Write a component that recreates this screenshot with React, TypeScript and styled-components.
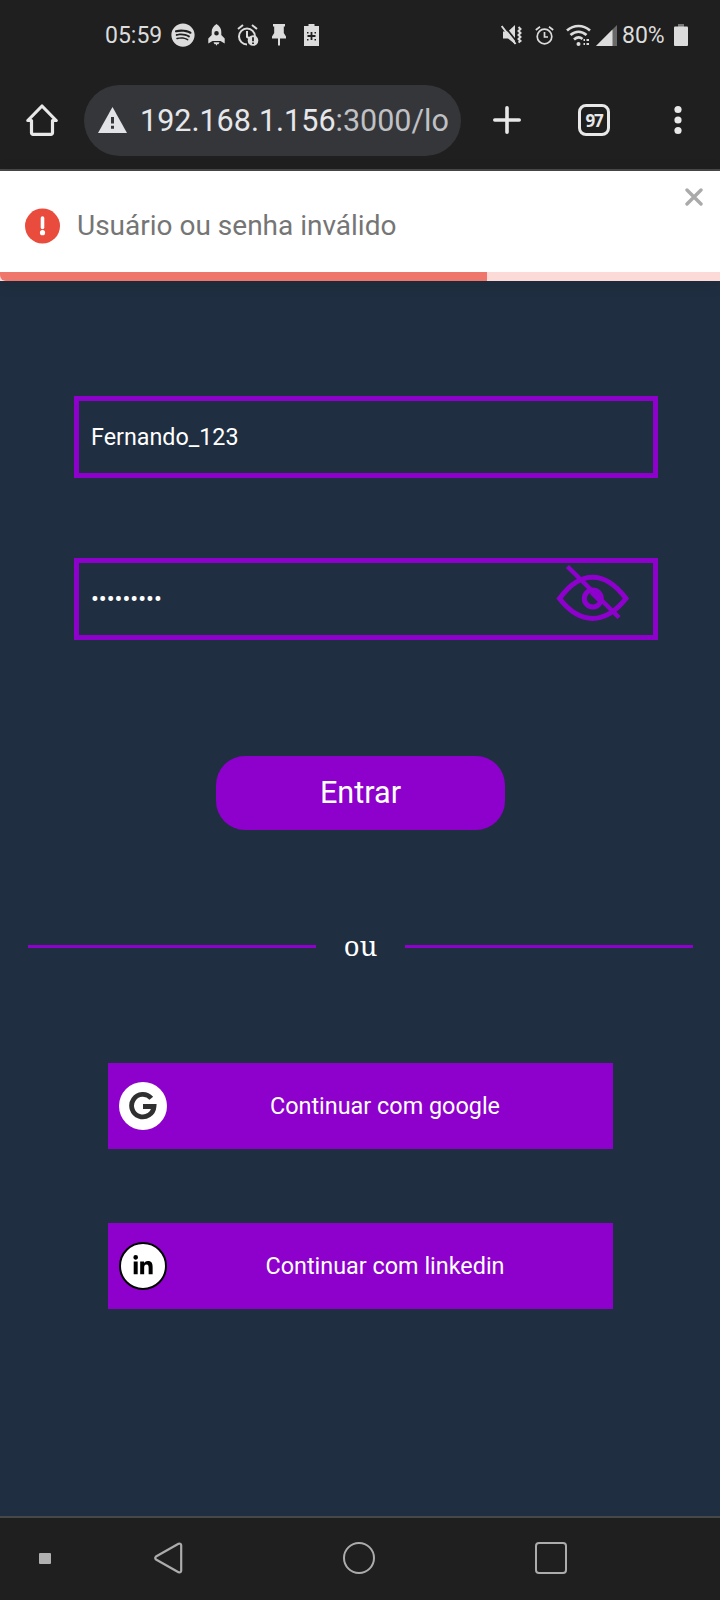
import React from "react";
import styled, { createGlobalStyle } from "styled-components";
import { FaSpotify, FaLinkedinIn } from "react-icons/fa";

const GlobalStyle = createGlobalStyle`
  *, *::before, *::after { box-sizing: border-box; }
  body { margin: 0; background: #1f2e40; font-family: Roboto, "Liberation Sans", sans-serif; }
  button { font: inherit; border: 0; padding: 0; }
  svg { display: block; flex: none; }
`;

const purple = "#8e00cb";
const light = "#dcdcdc";

const Screen = styled.div`
  display: flex;
  flex-direction: column;
  width: 720px;
  height: 1600px;
  overflow: hidden;
  background: #1f2e40;
`;

const StatusBar = styled.div`
  display: flex;
  align-items: center;
  justify-content: space-between;
  height: 70px;
  padding: 0 32px 0 105px;
  background: #1f1f1f;
  color: ${light};
`;

const StatusGroup = styled.div<{ $gap?: number }>`
  display: flex;
  align-items: center;
  gap: ${(p) => p.$gap ?? 0}px;
`;

const StatusText = styled.span<{ $width: number }>`
  width: ${(p) => p.$width}px;
  font-size: 23px;
  line-height: 28px;
  padding-top: 1px;
  white-space: nowrap;
`;

const Toolbar = styled.div`
  display: flex;
  align-items: center;
  height: 101px;
  padding: 1px 38px 0 26px;
  background: #1f1f1f;
  border-bottom: 2px solid #49494a;
`;

const AddressBar = styled.div`
  display: flex;
  align-items: center;
  width: 377px;
  height: 71px;
  margin: 0 32px 0 26px;
  padding-left: 14px;
  border-radius: 36px;
  background: #35363a;
`;

const Address = styled.span`
  margin-left: 12px;
  padding-top: 2px;
  color: #c0c1c5;
  font-size: 30.5px;
  line-height: 36px;
  white-space: nowrap;
`;

const Host = styled.span`
  color: #e6e7ea;
`;

const TabCount = styled.div`
  display: flex;
  align-items: center;
  justify-content: center;
  width: 32px;
  height: 32px;
  margin: 0 64px 0 57px;
  border: 3.5px solid #e8e8e8;
  border-radius: 8px;
  color: #e8e8e8;
  font: 700 17px "Open Sans", "Noto Sans", sans-serif;
  letter-spacing: -1.2px;
`;

const Toast = styled.div`
  display: flex;
  flex-direction: column;
  height: 110px;
  background: #fff;
  box-shadow: 0 2px 15px rgba(0, 0, 0, 0.12);
`;

const ToastBody = styled.div`
  display: flex;
  align-items: center;
  height: 101px;
  padding: 8px 17px 0 25px;
`;

const ToastMessage = styled.span`
  flex: 1;
  margin-left: 16px;
  color: #757575;
  font-size: 28px;
  line-height: 34px;
`;

const CloseButton = styled.button`
  align-self: flex-start;
  margin-top: 9px;
  background: none;
`;

const ProgressTrack = styled.div`
  flex: none;
  height: 9px;
  background: #fbdad7;
`;

const Progress = styled.div`
  width: 487px;
  height: 9px;
  border-bottom-left-radius: 6px;
  background: #ef766b;
`;

const Login = styled.main`
  display: flex;
  flex: 1;
  flex-direction: column;
  align-items: center;
  padding-top: 115px;
`;

const Field = styled.div`
  display: flex;
  align-items: center;
  justify-content: space-between;
  width: 584px;
  height: 82px;
  margin: 0 0 80px 12px;
  padding: 0 23px 2px 12px;
  border: 5px solid ${purple};
  color: #fff;
  font-size: 23.3px;
  line-height: 30px;
`;

const FieldText = styled.span`
  padding-top: 2px;
`;

const SubmitButton = styled.button`
  width: 289px;
  height: 74px;
  margin-top: 36px;
  padding: 0 0 2px 1px;
  border-radius: 29px;
  background: ${purple};
  color: #fff;
  font-size: 30.6px;
`;

const Divider = styled.div`
  display: flex;
  align-items: center;
  justify-content: space-between;
  width: 665px;
  height: 40px;
  margin: 96px 0 97px 1px;
  color: #fff;
  font: 27.5px/36px "Noto Serif", "DejaVu Serif", serif;
`;

const Rule = styled.span`
  width: 288px;
  height: 3px;
  background: ${purple};
`;

const SocialButton = styled.button`
  display: flex;
  align-items: center;
  width: 505px;
  height: 86px;
  margin: 0 0 74px 1px;
  padding-left: 11px;
  background: ${purple};
  color: #fff;
  font-size: 23.4px;
`;

const Badge = styled.span<{ $outlined?: boolean }>`
  display: flex;
  align-items: center;
  justify-content: center;
  width: 48px;
  height: 48px;
  border: ${(p) => (p.$outlined ? "2px solid #000" : "0")};
  border-radius: 50%;
  background: #fff;
  color: #000;
`;

const SocialLabel = styled.span`
  flex: 1;
  padding-right: 10px;
  text-align: center;
`;

const NavBar = styled.nav`
  display: flex;
  align-items: center;
  height: 84px;
  padding: 0 0 2px 39px;
  border-top: 2px solid #47484a;
  background: #1f1f1f;
`;

const Recent = styled.span`
  width: 12px;
  height: 11px;
  border-radius: 1px;
  background: #b0b0b0;
`;

const Back = styled.span`
  margin: 0 160px 0 103px;
`;

const HomeCircle = styled.span`
  width: 32px;
  height: 32px;
  border: 2px solid #acacac;
  border-radius: 50%;
`;

const Overview = styled.span`
  width: 32px;
  height: 32px;
  margin-left: 160px;
  border: 2px solid #acacac;
  border-radius: 4px;
`;

const RocketIcon = () => (
  <svg width="17" height="22" viewBox="0 0 17 22">
    <path fillRule="evenodd" fill={light} d="M8.500 0C5 2.300 3.700 5 3.700 8v3L.3 14.500V19.500L4.500 17h8l4.200 2.500V14.500L13.300 11V8c0-3-1.300-5.700-4.800-8ZM8.500 7a2.300 2.300 0 1 1 0 4.600 2.300 2.300 0 0 1 0-4.600Z" />
    <path fill={light} d="M5.500 18.300h6l-1 2-1-.3-1 1.700-1-1.700-1 .3Z" />
  </svg>
);

const AlarmAlertIcon = () => (
  <svg width="22" height="22" viewBox="0 0 22 22" fill="none" stroke={light} strokeWidth="2">
    <path d="M1 5 6 1M15 1l5 4M10 20.500a8 8 0 1 1 8-8M10 7v6l2 1" />
    <circle cx="16" cy="16.500" r="5.300" fill={light} stroke="none" />
    <path stroke="#1f1f1f" strokeWidth="1.800" d="M16 13.200v4M16 18.500v1.500" />
  </svg>
);

const PinIcon = () => (
  <svg width="14" height="22" viewBox="0 0 14 22" fill={light}>
    <path d="M1 0h12v2.500h-1.200V9L14 12.500v2H8V21l-1 1-1-1v-6.500H0v-2L2.200 9V2.500H1Z" />
  </svg>
);

const BatterySaverIcon = () => (
  <svg width="15" height="22" viewBox="0 0 15 22">
    <path fill={light} d="M4.500 0h6v2H15v20H0V2h4.500Z" />
    <path stroke="#1f1f1f" strokeWidth="1.800" fill="none" d="M7.500 8v8M3.500 12h8" />
    <path fill="#1f1f1f" d="M3 8h1.500v1.500H3ZM10.500 8H12v1.500h-1.500ZM3 15h1.500v1.500H3ZM10.500 15H12v1.500h-1.500Z" />
  </svg>
);

const MutedIcon = () => (
  <svg width="22" height="20" viewBox="0 0 22 20">
    <path fill={light} d="M2 6.500h5L14 0v19l-7-5.500H2Z" />
    <path stroke="#1f1f1f" strokeWidth="1.800" d="m2.500 0 14 17.500" />
    <path stroke={light} strokeWidth="2" fill="none" d="m.6 1 14 18M17.500 2l2 2-2 2 2 2-2 2 2 2-2 2 2 2-2 1.500" />
  </svg>
);

const AlarmIcon = () => (
  <svg width="19" height="19" viewBox="0 0 19 19" fill="none" stroke={light} strokeWidth="1.700">
    <circle cx="9.500" cy="10.500" r="7.300" />
    <path d="M9.500 6v5h3.500M.8 4 5 .8M14 .8 18.200 4" />
  </svg>
);

const WifiIcon = () => (
  <svg width="25" height="22" viewBox="0 0 25 22" fill="none" stroke={light} strokeWidth="2.700">
    <path d="M1 6.500c7-6 16-6 23 0M4.500 11c5-4.300 11-4.300 16 0M8 15.500c3-2.600 6-2.600 8.500-.5" />
    <circle cx="12.500" cy="20" r="2" fill={light} stroke="none" />
    <path strokeWidth="1.800" d="M17.500 16h1.500M20.500 16H23M17.500 20H19M20.500 20H23" />
  </svg>
);

const SignalIcon = () => (
  <svg width="21" height="21" viewBox="0 0 21 21">
    <path fill="#69696a" d="M21 0v21H0Z" />
    <path fill={light} d="M16.500 4.500V21H0Z" />
  </svg>
);

const BatteryIcon = () => (
  <svg width="14" height="22" viewBox="0 0 14 22">
    <path fill="#777" d="M4 0h6v3H4Z" />
    <rect y="2.500" width="14" height="19.500" rx="1" fill={light} />
  </svg>
);

const HomeIcon = () => (
  <svg width="32" height="32" viewBox="0 0 32 32" fill="none" stroke="#e8e8e8" strokeWidth="3.200" strokeLinecap="round" strokeLinejoin="round">
    <path d="M1.800 16.500 16 2l14.200 14.500H26.500v12.300a1.500 1.500 0 0 1-1.500 1.500H7a1.500 1.500 0 0 1-1.500-1.500V16.500Z" />
  </svg>
);

const WarningIcon = () => (
  <svg width="30" height="26" viewBox="0 0 30 26">
    <path fill="#e2e3e6" d="M14.500 0 29 26H0Z" />
    <path stroke="#35363a" strokeWidth="3" d="M14.500 10v6.500M14.500 18.800v3" />
  </svg>
);

const PlusIcon = () => (
  <svg width="28" height="28" viewBox="0 0 28 28" stroke="#e8e8e8" strokeWidth="3.600" strokeLinecap="round">
    <path d="M14 1.800v24.400M1.800 14h24.400" />
  </svg>
);

const MenuIcon = () => (
  <svg width="8" height="30" viewBox="0 0 8 30" fill="#e8e8e8">
    <circle cx="4" cy="4.500" r="3.600" />
    <circle cx="4" cy="15" r="3.600" />
    <circle cx="4" cy="25.500" r="3.600" />
  </svg>
);

const ErrorIcon = () => (
  <svg width="36" height="36" viewBox="0 0 36 36" stroke="#fff" strokeWidth="3.600" strokeLinecap="round">
    <circle cx="17.500" cy="18" r="17.500" fill="#e94b3c" stroke="none" />
    <path d="M17.500 10v9.500" />
    <circle cx="17.500" cy="24.700" r="2.600" fill="#fff" stroke="none" />
  </svg>
);

const CloseIcon = () => (
  <svg width="18" height="18" viewBox="0 0 18 18" stroke="#aaa" strokeWidth="3.400" strokeLinecap="round">
    <path d="m2 2 14 14M16 2 2 16" />
  </svg>
);

const HiddenEyeIcon = () => (
  <svg width="74" height="68" viewBox="0 0 74 68" fill="none" stroke={purple} strokeWidth="5">
    <path d="M3.500 34.500C24 6 49 6 70 34.500 49 61 24 61 3.500 34.500Z" />
    <circle cx="36.800" cy="34.500" r="8.500" strokeWidth="5" />
    <path strokeWidth="4.500" d="m11.500 2.500 51.500 51" />
    <path d="m36 28 8 8" strokeWidth="6" />
  </svg>
);

const GoogleIcon = () => (
  <svg width="28" height="28" viewBox="0 0 28 28" fill="none" stroke="#303030" strokeWidth="4.800">
    <path d="M22.300 6.300A11.200 11.200 0 1 0 25 14.500H14" />
  </svg>
);

const BackIcon = () => (
  <svg width="29" height="32" viewBox="0 0 29 32" fill="none" stroke="#acacac" strokeWidth="2.200" strokeLinejoin="round">
    <path d="M24.500 1.800 2 14.500q-1.500 1.500 0 3L24.500 30.200q2.700.8 2.700-1.700v-25q0-2.500-2.700-1.700Z" />
  </svg>
);

export default function App() {
  return (
    <>
      <GlobalStyle />
      <Screen>
        <StatusBar>
          <StatusGroup>
            <StatusText $width={66}>05:59</StatusText>
            <StatusGroup $gap={18}>
              <StatusGroup $gap={12.5}>
                <FaSpotify size={24} color={light} />
                <RocketIcon />
                <AlarmAlertIcon />
                <PinIcon />
              </StatusGroup>
              <BatterySaverIcon />
            </StatusGroup>
          </StatusGroup>
          <StatusGroup $gap={12}>
            <MutedIcon />
            <AlarmIcon />
            <StatusGroup $gap={5}>
              <WifiIcon />
              <SignalIcon />
              <StatusText $width={47}>80%</StatusText>
              <BatteryIcon />
            </StatusGroup>
          </StatusGroup>
        </StatusBar>

        <Toolbar>
          <HomeIcon />
          <AddressBar>
            <WarningIcon />
            <Address>
              <Host>192.168.1.156</Host>:3000/lo
            </Address>
          </AddressBar>
          <PlusIcon />
          <TabCount>97</TabCount>
          <MenuIcon />
        </Toolbar>

        <Toast role="alert">
          <ToastBody>
            <ErrorIcon />
            <ToastMessage>Usuário ou senha inválido</ToastMessage>
            <CloseButton aria-label="Fechar">
              <CloseIcon />
            </CloseButton>
          </ToastBody>
          <ProgressTrack>
            <Progress />
          </ProgressTrack>
        </Toast>

        <Login>
          <Field>
            <FieldText>Fernando_123</FieldText>
          </Field>
          <Field>
            <FieldText>•••••••••</FieldText>
            <HiddenEyeIcon />
          </Field>
          <SubmitButton>Entrar</SubmitButton>
          <Divider>
            <Rule />
            ou
            <Rule />
          </Divider>
          <SocialButton>
            <Badge>
              <GoogleIcon />
            </Badge>
            <SocialLabel>Continuar com google</SocialLabel>
          </SocialButton>
          <SocialButton>
            <Badge $outlined>
              <FaLinkedinIn size={22} />
            </Badge>
            <SocialLabel>Continuar com linkedin</SocialLabel>
          </SocialButton>
        </Login>

        <NavBar>
          <Recent />
          <Back>
            <BackIcon />
          </Back>
          <HomeCircle />
          <Overview />
        </NavBar>
      </Screen>
    </>
  );
}
